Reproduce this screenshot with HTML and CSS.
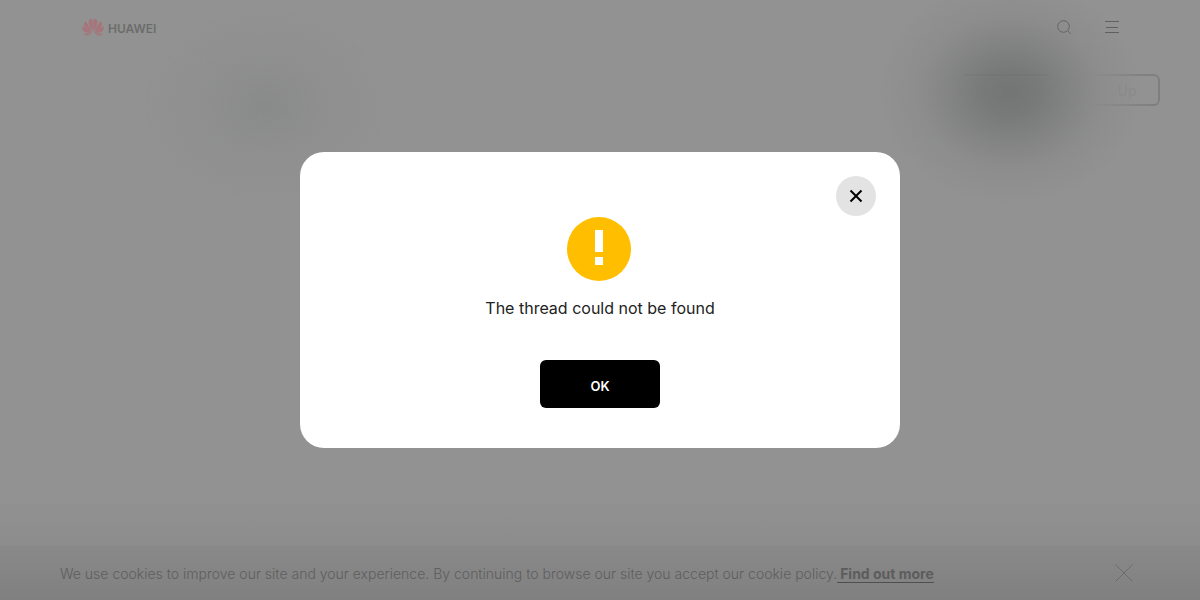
FILE: index.html
```html
<!doctype html>
<html lang="en">
<head>
    <meta charset="utf-8">
    <meta name="viewport" content="width=device-width, initial-scale=1.0">
    <title>HUAWEI Community</title>
    <link rel="stylesheet" href="styles.css">
</head>
<body>
    <header class="site-header">
        <a href="#" class="logo">
            <svg width="22" height="18" viewBox="0 0 22 18" aria-hidden="true">
                <g id="petals">
                    <path d="M10.700 13.500C10.800 10 11 4 10 .8C7.700 .7 6.500 2.200 6.600 4.300C6.800 7.300 9 10.800 10.700 13.500z"/>
                    <path d="M10.100 14.200C8.500 10.800 6 6.300 3.600 3.200C2 4.600 1.600 6.300 2.500 8.300C3.800 10.700 7.200 12.900 10.100 14.200z"/>
                    <path d="M9.700 14.900C6.900 12.900 3.500 10.400 .5 8.100C-.1 10.500 .6 12.400 2.400 13.600C4.400 14.800 7 15 9.700 14.900z"/>
                    <path d="M9.500 15.500C6.800 15.400 4.200 15.300 1.700 15.200C2.800 17.200 4.500 17.800 6.200 17.200C7.400 16.800 8.500 16.200 9.500 15.500z"/>
                </g>
                <use href="#petals" transform="matrix(-1 0 0 1 22 0)"/>
            </svg>
            <span>HUAWEI</span>
        </a>
        <nav class="tools">
            <button type="button" class="icon-btn" aria-label="Search">
                <svg width="16" height="16" viewBox="0 0 16 16">
                    <circle cx="7.500" cy="7.500" r="5.800"/>
                    <path d="M11.700 11.700l3 3"/>
                </svg>
            </button>
            <button type="button" class="icon-btn" aria-label="Menu">
                <svg width="16" height="16" viewBox="0 0 16 16">
                    <path d="M1 2.500h14M2 8.500h12M1 13.500h14"/>
                </svg>
            </button>
        </nav>
    </header>

    <main class="page">
        <button type="button" class="login" aria-label="Log in"></button>
        <button type="button" class="signup">Up</button>
    </main>

    <footer class="cookies">
        <p>We use cookies to improve our site and your experience. By continuing to browse our site you accept our cookie policy.<a href="#">Find out more</a></p>
        <button type="button" class="icon-btn" aria-label="Close cookie notice">
            <svg width="18" height="18" viewBox="0 0 18 18">
                <path d="M.5 .5l17 17M17.500 .5l-17 17"/>
            </svg>
        </button>
    </footer>

    <div class="overlay">
        <div class="modal" role="alertdialog" aria-modal="true" aria-labelledby="msg">
            <button type="button" class="close" aria-label="Close">
                <svg width="14" height="14" viewBox="0 0 14 14">
                    <path d="M1.500 1.500l11 11M12.500 1.500l-11 11"/>
                </svg>
            </button>
            <svg class="warning" width="66" height="64" viewBox="0 0 66 64" aria-hidden="true">
                <circle cx="32" cy="32" r="32"/>
                <path d="M28 13h8v22h-8zM28 40h8v8h-8z"/>
            </svg>
            <p id="msg">The thread could not be found</p>
            <button type="button" class="ok">OK</button>
        </div>
    </div>
</body>
</html>
```
FILE: styles.css
```css
* {
    box-sizing: border-box;
}

body {
    margin: 0;
    min-height: 100vh;
    display: flex;
    flex-direction: column;
    background: linear-gradient(#929292 82%, #8c8c8c 92%);
    color: #666;
    font-family: Inter, "Open Sans", sans-serif;
    font-size: 14px;
}

button {
    padding: 0;
    border: 0;
    background: none;
    font-family: inherit;
    cursor: pointer;
}

svg {
    display: block;
}

p {
    margin: 0;
}

.site-header {
    display: flex;
    align-items: center;
    justify-content: space-between;
    height: 54px;
    padding: 0 80px 0 82px;
}

.logo {
    display: flex;
    align-items: center;
    gap: 4px;
    color: #6c6c6c;
    font-size: 12px;
    font-weight: 600;
    text-decoration: none;
}

.logo svg {
    fill: #a6747a;
}

.logo span {
    padding-top: 2px;
}

.tools {
    display: flex;
    gap: 32px;
}

.icon-btn svg {
    fill: none;
    stroke: #5f5f5f;
    stroke-width: 1;
}

.page {
    flex: 1;
    display: flex;
    justify-content: flex-end;
    align-items: flex-start;
    gap: 12px;
    padding: 20px 40px;
}

.login {
    width: 84px;
    height: 32px;
    border-top: 2px solid #8a8a8a;
}

/* fades out towards the blurred side */
.signup {
    width: 100px;
    height: 32px;
    padding-left: 36px;
    border: 2px solid #7e7e7e;
    border-left: 0;
    border-radius: 6px;
    color: #868686;
    font-size: 14px;
    -webkit-mask-image: linear-gradient(to right, transparent 30%, #000 95%);
    mask-image: linear-gradient(to right, transparent 30%, #000 95%);
}

.cookies {
    display: flex;
    align-items: center;
    justify-content: space-between;
    height: 54px;
    padding: 0 67px 0 60px;
    background: linear-gradient(#898989, #808080);
    color: #5e5e5e;
    font-weight: 300;
}

.cookies a {
    padding-left: 3px;
    border-bottom: 1px solid #4f4f4f;
    color: #5c5c5c;
    font-weight: 700;
    text-decoration: none;
}

.cookies .icon-btn svg {
    stroke: #6c6c6c;
}

.overlay {
    position: fixed;
    inset: 0;
    display: flex;
    align-items: center;
    justify-content: center;
    padding: 20px;
    background:
        radial-gradient(ellipse 130px 110px at calc(100% - 190px) 92px, rgba(98, 100, 99, .64), rgba(100, 102, 101, .56) 22%, rgba(108, 110, 109, .42) 44%, rgba(120, 122, 121, .2) 70%, transparent),
        radial-gradient(ellipse 120px 95px at 265px 105px, rgba(128, 131, 129, .5), rgba(134, 137, 135, .28) 50%, transparent);
}

.modal {
    position: relative;
    display: flex;
    flex-direction: column;
    align-items: center;
    width: 100%;
    max-width: 600px;
    padding: 65px 24px 40px;
    border-radius: 24px;
    background: #fff;
}

.close {
    position: absolute;
    top: 24px;
    right: 24px;
    display: flex;
    align-items: center;
    justify-content: center;
    width: 40px;
    height: 40px;
    border-radius: 50%;
    background: #e3e3e3;
}

.close svg {
    stroke: #000;
    stroke-width: 2;
}

.warning circle {
    fill: #ffbf00;
}

.warning path {
    fill: #fff;
}

.modal p {
    margin: 15px 0 40px;
    color: #222;
    font-size: 16px;
    line-height: 24px;
}

.ok {
    width: 120px;
    height: 48px;
    padding-top: 4px;
    border-radius: 6px;
    background: #000;
    color: #fff;
    font-size: 13px;
    font-weight: 600;
}
```
